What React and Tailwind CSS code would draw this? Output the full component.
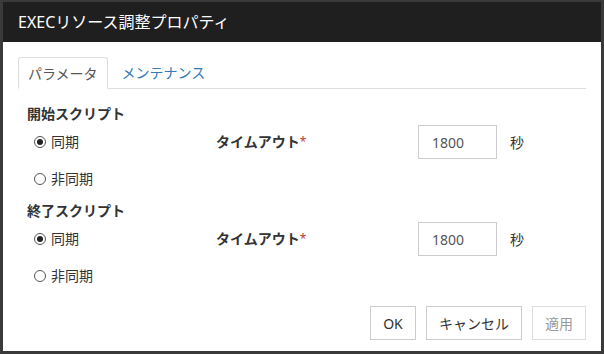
import React from "react";

const font = { fontFamily: '"Noto Sans", "Noto Sans CJK JP", sans-serif' };

function Radio({ checked, label }) {
  return (
    <label className="flex items-center gap-[5px] text-[14px] leading-[20px] text-[#333]">
      <span className="w-[12px] h-[12px] rounded-full border border-[#555] flex items-center justify-center bg-white">
        {checked && <span className="w-[6px] h-[6px] rounded-full bg-[#222]" />}
      </span>
      <span>{label}</span>
    </label>
  );
}

function Section({ title }) {
  return (
    <div className="flex flex-col">
      <div className="font-bold text-[14px] text-[#333] h-[20px] leading-[20px]">{title}</div>
      <div className="flex items-center h-[36px]">
        <div className="w-[189px] pl-[7px]">
          <Radio checked label="同期" />
        </div>
        <div className="w-[202px] font-bold text-[14px] leading-[20px] text-[#333]">
          タイムアウト<span className="text-[#c0392b] font-normal text-[12px] align-top">*</span>
        </div>
        <div className="w-[79px] h-[34px] border border-[#ccc] flex items-center px-[13px] text-[14px] text-[#555]">
          1800
        </div>
        <div className="pl-[13px] text-[14px] text-[#333]">秒</div>
      </div>
      <div className="h-[38px] pl-[7px] flex items-center">
        <Radio label="非同期" />
      </div>
    </div>
  );
}

export default function App() {
  return (
    <div style={font} className="w-[604px] h-[354px] bg-white relative">
      <div className="absolute left-0 top-0 w-[604px] h-[354px] border-t-2 border-l-[3px] border-r-[3px] border-b-[3px] border-[#3a3a3a] pointer-events-none" />
      <div className="h-[42px] bg-[#1f1f1f] border-t-2 border-[#0a0a0a] flex items-center pl-[18px] text-white text-[16px]">
        EXECリソース調整プロパティ
      </div>
      <div className="px-[18px] pt-[15px]">
        <div className="flex items-end border-b border-[#ddd] w-[568px] h-[32px]">
          <div className="h-[32px] px-[9px] border border-[#ddd] border-b-white -mb-px bg-white rounded-t-[3px] flex items-center text-[14px] text-[#555]">
            パラメータ
          </div>
          <div className="h-[32px] px-[14px] flex items-center text-[14px] text-[#337ab7]">
            メンテナンス
          </div>
        </div>
        <div className="pl-[9px] pt-[15px] flex flex-col gap-[3px]">
          <Section title="開始スクリプト" />
          <Section title="終了スクリプト" />
        </div>
        <div className="flex justify-end gap-[10px] w-[568px] mt-[11px]">
          <div className="h-[34px] w-[46px] border border-[#ccc] flex items-center justify-center text-[14px] text-[#333]">OK</div>
          <div className="h-[34px] w-[96px] border border-[#ccc] flex items-center justify-center text-[14px] text-[#333]">キャンセル</div>
          <div className="h-[34px] w-[54px] border border-[#ddd] flex items-center justify-center text-[14px] text-[#999]">適用</div>
        </div>
      </div>
    </div>
  );
}
